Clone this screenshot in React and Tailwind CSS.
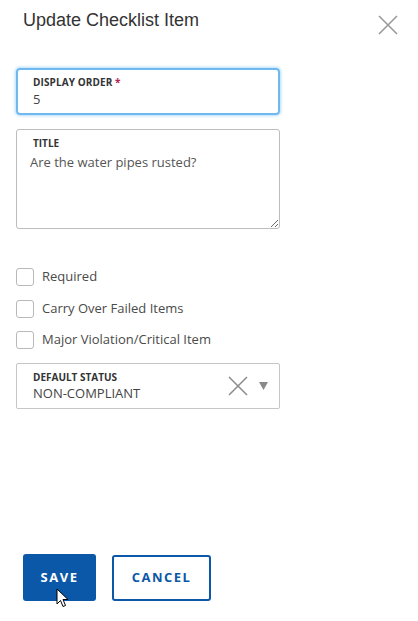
import React, { useState } from 'react';

const sans = { fontFamily: '"Open Sans", "Noto Sans", sans-serif' };

function Checkbox({ label }) {
  const [on, setOn] = useState(false);
  return (
    <label className="flex items-center h-[18px] cursor-pointer" onClick={() => setOn(v => !v)}>
      <span className="w-[18px] h-[18px] rounded-[3px] border border-[#b9b9b9] bg-white flex-none" />
      <span className="ml-[8px] text-[13px] text-[#4a4a4a]">{label}</span>
    </label>
  );
}

export default function App() {
  const [order, setOrder] = useState('5');
  const [title, setTitle] = useState('Are the water pipes rusted?');

  return (
    <div className="relative w-[418px] h-[621px] bg-white overflow-hidden" style={sans}>
      {/* Header */}
      <div className="flex justify-between items-start pl-[23px] pr-[20px] pt-[8px]">
        <h1 className="text-[18px] leading-[24px] text-[#333]" style={{ fontFamily: '"Liberation Sans", Arial, sans-serif' }}>
          Update Checklist Item
        </h1>
        <button className="mt-[7px] w-[20px] h-[20px] text-[#9a9a9a]">
          <svg width="20" height="20" viewBox="0 0 20 20" fill="none" stroke="currentColor" strokeWidth="1.6">
            <path d="M1 1 L19 19 M19 1 L1 19" />
          </svg>
        </button>
      </div>

      <div className="ml-[16px] w-[264px] mt-[33px] flex flex-col">
        {/* Display order */}
        <div className="h-[47px] rounded-[4px] border-2 border-[#6fb8f0] shadow-[0_0_3px_1px_#b5dcf9] px-[15px] pt-[5px]">
          <div className="text-[10px] leading-[14px] font-bold text-[#333] tracking-[0.1px]">
            DISPLAY ORDER <span className="text-[#b3264f]">*</span>
          </div>
          <input
            className="block w-full text-[13px] leading-[18px] text-[#444] outline-none mt-[1px]"
            value={order}
            onChange={e => setOrder(e.target.value)}
          />
        </div>

        {/* Title */}
        <div className="mt-[14px] h-[100px] rounded-[3px] border border-[#bdbdbd] flex flex-col overflow-hidden">
          <div className="px-[16px] pt-[6px] text-[10px] leading-[14px] font-bold text-[#333]">TITLE</div>
          <textarea
            className="flex-1 w-full pl-[13px] pt-[3px] text-[13px] leading-[18px] text-[#555] outline-none resize-y"
            value={title}
            onChange={e => setTitle(e.target.value)}
          />
        </div>

        {/* Checkboxes */}
        <div className="mt-[39px] flex flex-col gap-[13.5px]">
          <Checkbox label="Required" />
          <Checkbox label="Carry Over Failed Items" />
          <Checkbox label="Major Violation/Critical Item" />
        </div>

        {/* Default status */}
        <div className="mt-[14px] h-[46px] rounded-[2px] border border-[#c6c6c6] flex items-center pl-[16px] pr-[11px]">
          <div className="flex-1">
            <div className="text-[10px] leading-[14px] font-bold text-[#333]">DEFAULT STATUS</div>
            <div className="text-[13px] leading-[18px] text-[#444]">NON-COMPLIANT</div>
          </div>
          <svg width="20" height="20" viewBox="0 0 20 20" fill="none" stroke="#8a8a8a" strokeWidth="1.5">
            <path d="M1 1 L19 19 M19 1 L1 19" />
          </svg>
          <svg className="ml-[11px]" width="9" height="8" viewBox="0 0 9 8">
            <path d="M0 0 H9 L4.5 8 Z" fill="#8a8a8a" />
          </svg>
        </div>
      </div>

      {/* Buttons */}
      <div className="absolute left-[23px] top-[554px] flex items-center gap-[16px]">
        <button className="w-[73px] h-[47px] rounded-[3px] bg-[#0b57a8] text-white text-[13px] font-bold tracking-[1.5px]">
          SAVE
        </button>
        <button className="w-[99px] h-[46px] rounded-[3px] border-2 border-[#0b57a8] bg-white text-[#0b57a8] text-[13px] font-bold tracking-[1.5px]">
          CANCEL
        </button>
      </div>

      {/* mouse cursor */}
      <svg className="absolute left-[56px] top-[588px]" width="14" height="20" viewBox="0 0 14 20">
        <path d="M1 1 L1 16 L4.5 12.5 L7 18.5 L9.5 17.5 L7 11.5 L12 11.5 Z" fill="white" stroke="black" strokeWidth="1" strokeLinejoin="round" />
      </svg>
    </div>
  );
}
